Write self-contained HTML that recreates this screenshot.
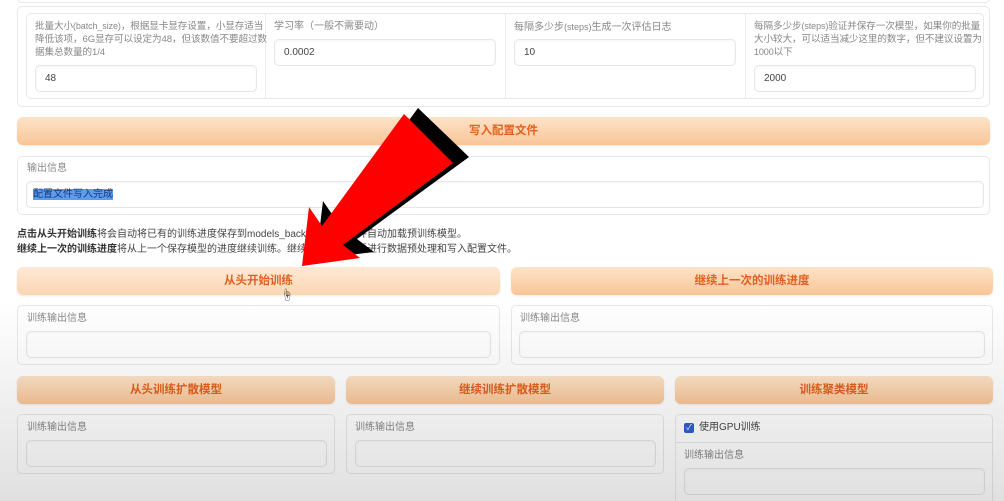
<!DOCTYPE html>
<html><head><meta charset="utf-8"><style>
*{box-sizing:border-box;margin:0;padding:0}
html,body{width:1004px;height:501px;overflow:hidden}
body{background:#fff;position:relative;font-family:"Liberation Sans","Noto Sans CJK SC",sans-serif;color:#555}
.abs{position:absolute}
.card{position:absolute;border:1px solid #e8e8e8;border-radius:5px;background:#fff}
.lbl{position:absolute;font-size:10px;color:#888;line-height:14px}
.inp{position:absolute;border:1px solid #e6e6e6;border-radius:5px;background:#fff;font-size:10px;color:#444;padding-left:9px;box-shadow:inset 0 1px 2px rgba(0,0,0,.04)}
.btn{position:absolute;border-radius:6px;background:linear-gradient(180deg,#fde3c8,#f9c597);color:#e2601f;font-weight:bold;font-size:11.5px;text-align:center;box-shadow:0 1px 2px rgba(0,0,0,.08)}
.vl{position:absolute;width:1px;background:#ececec}
.sm{font-size:9px}
</style></head><body>
<div class="card" style="left:17px;top:-8px;width:973px;height:11px"></div>
<div class="card" style="left:17px;top:6px;width:973px;height:101px"></div>
<div class="card" style="left:26px;top:13px;width:958px;height:86px"></div>
<div class="vl" style="left:265px;top:14px;height:84px"></div>
<div class="vl" style="left:505px;top:14px;height:84px"></div>
<div class="vl" style="left:745px;top:14px;height:84px"></div>
<div class="lbl" style="left:35px;top:20px;width:232px;line-height:13px;font-size:9.6px;letter-spacing:-0.1px">批量大小<span class="sm">(batch_size)</span>，根据显卡显存设置，小显存适当降低该项，6G显存可以设定为48，但该数值不要超过数据集总数量的1/4</div>
<div class="inp" style="left:35px;top:65px;width:222px;height:27px;line-height:25px">48</div>
<div class="lbl" style="left:274px;top:20px">学习率（一般不需要动）</div>
<div class="inp" style="left:274px;top:39px;width:222px;height:27px;line-height:25px">0.0002</div>
<div class="lbl" style="left:514px;top:20px">每隔多少步<span class="sm">(steps)</span>生成一次评估日志</div>
<div class="inp" style="left:514px;top:39px;width:222px;height:27px;line-height:25px">10</div>
<div class="lbl" style="left:754px;top:20px;width:232px;line-height:13px;font-size:9.6px;letter-spacing:-0.1px">每隔多少步<span class="sm">(steps)</span>验证并保存一次模型，如果你的批量大小较大，可以适当减少这里的数字，但不建议设置为<span class="sm">1000</span>以下</div>
<div class="inp" style="left:754px;top:65px;width:222px;height:27px;line-height:25px">2000</div>

<div class="btn" style="left:17px;top:117px;width:973px;height:28px;line-height:28px">写入配置文件</div>

<div class="card" style="left:17px;top:156px;width:973px;height:59px"></div>
<div class="lbl" style="left:27px;top:162px">输出信息</div>
<div class="inp" style="left:26px;top:181px;width:958px;height:27px;line-height:25px;padding-left:6px"><span style="background:#5b9bf0;color:#1e3a70">配置文件写入完成</span></div>

<div class="abs" style="left:17px;top:227px;font-size:10px;color:#444;line-height:15px;white-space:nowrap"><b style="color:#333">点击从头开始训练</b>将会自动将已有的训练进度保存到models_backup文件夹，并自动加载预训练模型。<br><b style="color:#333">继续上一次的训练进度</b>将从上一个保存模型的进度继续训练。继续训练前不需要进行数据预处理和写入配置文件。</div>

<div class="btn" style="left:17px;top:267px;width:483px;height:28px;line-height:28px;background:linear-gradient(180deg,#fee9d6,#fcd6b2)">从头开始训练</div>
<div class="btn" style="left:511px;top:267px;width:482px;height:28px;line-height:28px">继续上一次的训练进度</div>
<div class="card" style="left:17px;top:305px;width:483px;height:60px"></div>
<div class="lbl" style="left:27px;top:312px">训练输出信息</div>
<div class="inp" style="left:26px;top:331px;width:465px;height:27px"></div>
<div class="card" style="left:511px;top:305px;width:482px;height:60px"></div>
<div class="lbl" style="left:520px;top:312px">训练输出信息</div>
<div class="inp" style="left:519px;top:331px;width:466px;height:27px"></div>

<div class="btn" style="left:17px;top:376px;width:318px;height:28px;line-height:28px">从头训练扩散模型</div>
<div class="btn" style="left:346px;top:376px;width:318px;height:28px;line-height:28px">继续训练扩散模型</div>
<div class="btn" style="left:675px;top:376px;width:318px;height:28px;line-height:28px">训练聚类模型</div>
<div class="card" style="left:17px;top:414px;width:318px;height:60px"></div>
<div class="lbl" style="left:27px;top:421px">训练输出信息</div>
<div class="inp" style="left:26px;top:440px;width:301px;height:27px"></div>
<div class="card" style="left:346px;top:414px;width:318px;height:60px"></div>
<div class="lbl" style="left:355px;top:421px">训练输出信息</div>
<div class="inp" style="left:355px;top:440px;width:301px;height:27px"></div>
<div class="card" style="left:675px;top:414px;width:318px;height:95px"></div>
<div class="abs" style="left:684px;top:423px;width:10px;height:10px;background:#2f5fd0;border-radius:2px;color:#fff;font-size:8px;line-height:10px;text-align:center">✓</div>
<div class="abs" style="left:699px;top:421px;font-size:10px;color:#444;line-height:14px">使用GPU训练</div>
<div class="abs" style="left:676px;top:442px;width:316px;height:1px;background:#e8e8e8"></div>
<div class="lbl" style="left:684px;top:449px">训练输出信息</div>
<div class="inp" style="left:684px;top:468px;width:301px;height:27px"></div>

<div class="abs" style="left:0;top:0;width:1004px;height:501px;background:linear-gradient(180deg,rgba(0,0,0,0) 0,rgba(0,0,0,0) 300px,rgba(0,0,0,.12) 501px)"></div>

<svg class="abs" style="left:0;top:0" width="1004" height="501">
<polygon points="316,259 323,201 336,220 418,108 469,157 357,239 374,252" fill="#000"/>
<polygon points="302,266 309,207 322,226 404,114 453,163 343,245 360,258" fill="#f00"/>
</svg>
<div class="abs" style="left:281px;top:286px;font-size:12px;color:#333">☝</div>
</body></html>
